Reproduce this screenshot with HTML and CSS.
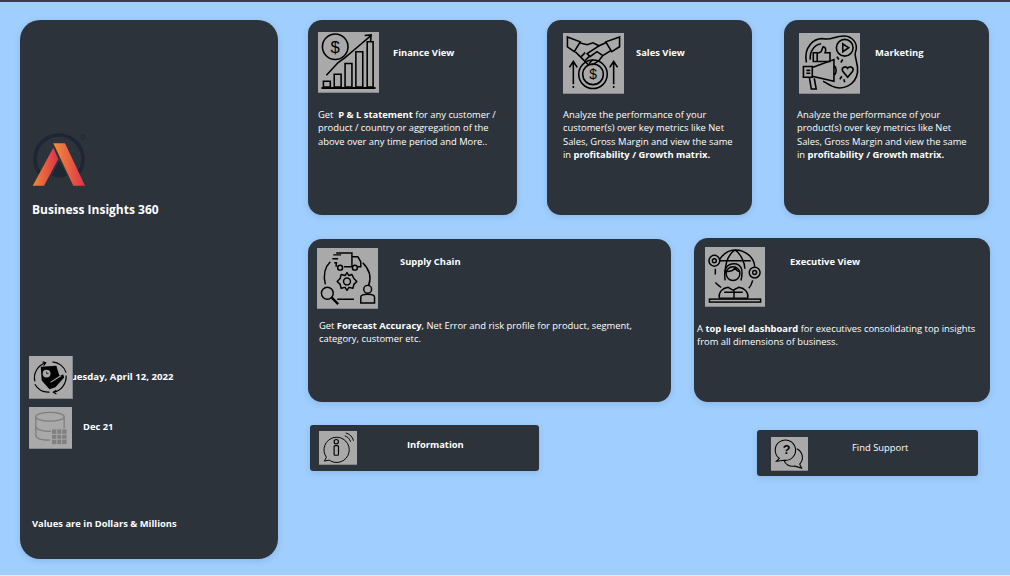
FILE: index.html
```html
<html>
  <head>
    <title>Business Insights 360</title>
    <link rel="stylesheet" href="styles.css">
  </head>
  <body>
    <div class="side panel">
      <svg class="logo" viewBox="0 0 56 56" aria-hidden="true">
        <defs>
          <linearGradient id="leg-left" x1="0" y1="0" x2="1" y2="0">
            <stop offset="0" stop-color="#f08a35"/><stop offset="1" stop-color="#dc2f4a"/>
          </linearGradient>
          <linearGradient id="leg-right" x1="0" y1="0" x2="1" y2="0">
            <stop offset="0" stop-color="#f0903a"/><stop offset="1" stop-color="#de3149"/>
          </linearGradient>
        </defs>
        <path d="M10 44A24 24 0 1 1 44 44" fill="none" stroke="#1e2633" stroke-width="3.6"/>
        <path d="M27.3 29 20 43.5C24 46 31 46 35 43.5Z" fill="#1e2633"/>
        <circle cx="51" cy="5" r="2" fill="none" stroke="#1e2633" stroke-width=".8"/>
        <path d="M21.3 15.7 .7 53.7H12L26.3 27Z" fill="url(#leg-left)"/>
        <path d="M21.3 11.3H33L53 53.7H41.3Z" fill="url(#leg-right)"/>
      </svg>
      <h1 class="brand">Business Insights 360</h1>
      <div class="stat stat-date">
        <span class="tile tile-date">
          <svg viewBox="0 0 44 43" aria-hidden="true">
            <g fill="none" stroke="#000" stroke-width="1.2">
              <path d="M6 26A16 16 0 0 1 17 7"/><path d="M14 6l3 1-2 3"/>
              <path d="M24 6A16 16 0 0 1 38 17"/>
              <path d="M38 20A16 16 0 0 1 25 37"/><path d="M28 35l-3 2 3 2"/>
              <path d="M21 37A16 16 0 0 1 6 29"/>
            </g>
            <path d="M12 11 28 10 31 20 35 19 36 22 27 32 21 34 13 25Z" fill="#000"/>
            <circle cx="18" cy="18" r="4" fill="#a9a9a9"/>
            <path d="M18 16v2h2" fill="none" stroke="#000" stroke-width=".8"/>
            <path d="M22 27 33 20" stroke="#a9a9a9" stroke-width="1.2"/>
          </svg>
        </span>
        <span class="stat-text">Tuesday, April 12, 2022</span>
      </div>
      <div class="stat stat-month">
        <span class="tile tile-db">
          <svg viewBox="0 0 43 42" aria-hidden="true">
            <g fill="none" stroke="#7d7d7d" stroke-width="1.3">
              <ellipse cx="21" cy="10" rx="14.5" ry="4.5"/>
              <path d="M6.500 10V29C6.500 32 12 34 21 34"/>
              <path d="M6.500 20C6.500 23 13 25 22 25"/>
              <path d="M35.500 10V22"/>
            </g>
            <rect x="23" y="23" width="15" height="15" fill="#808080"/>
            <path d="M28 23v15M33 23v15M23 28h15M23 33h15" stroke="#a9a9a9" stroke-width="1"/>
          </svg>
        </span>
        <span class="stat-text">Dec 21</span>
      </div>
      <p class="note">Values are in Dollars &amp; Millions</p>
    </div>

    <div class="main">
      <div class="row">
        <div class="panel card card-finance">
          <div class="head">
            <span class="tile">
              <svg viewBox="0 0 61 61" aria-hidden="true">
                <g fill="none" stroke="#000" stroke-width="1.6">
                  <circle cx="17" cy="15" r="13"/>
                  <path d="M5 50h7v6H5zM16 43h7v13h-7zM27 32h7v24h-7zM38 20h7v36h-7zM49.500 10h6v46h-6z"/>
                  <path d="M3 57h55" stroke-width="2"/>
                  <path d="M8 44 20 31 27 26 40 15 53 4"/>
                  <path d="M47 3.500 53.500 3 53 9.500"/>
                </g>
                <text class="glyph" x="17" y="21" font-size="17" text-anchor="middle">$</text>
              </svg>
            </span>
            <h2 class="title">Finance View</h2>
          </div>
          <p class="text">Get &nbsp;<b>P &amp; L statement</b> for any customer / product / country or aggregation of the above over any time period and More..</p>
        </div>

        <div class="panel card card-sales">
          <div class="head">
            <span class="tile">
              <svg viewBox="0 0 61 61" aria-hidden="true">
                <g fill="none" stroke="#000" stroke-width="1.6">
                  <path d="M4 4 17 9 11 19 4 14Z"/>
                  <path d="M57 4 43 9 49 19 57 14Z"/>
                  <path d="M16 10 24 12 30 10 36 13 43 10"/>
                  <path d="M12 19 17 24 25 32 30 32 36 28 40 23 48 18"/>
                  <path d="M36 13 24 21 27 24 34 19 40 23"/>
                  <path d="M18 24 22 20M22 28 26 24M26 31 30 27"/>
                  <circle cx="30" cy="42" r="14.500"/>
                  <circle cx="30" cy="42" r="10.500"/>
                  <path d="M10 52V30M6 35 10 29 14 35M51 52V30M47 35 51 29 55 35"/>
                  <path d="M10 54v2M51 54v2"/>
                </g>
                <text class="glyph" x="30" y="47" font-size="14" text-anchor="middle">$</text>
              </svg>
            </span>
            <h2 class="title">Sales View</h2>
          </div>
          <p class="text">Analyze the performance of your customer(s) over key metrics like Net Sales, Gross Margin and view the same in <b>profitability / Growth matrix.</b></p>
        </div>

        <div class="panel card card-marketing">
          <div class="head">
            <span class="tile">
              <svg viewBox="0 0 61 61" aria-hidden="true">
                <g fill="none" stroke="#000" stroke-width="1.6">
                  <path d="M7 30C4 15 14 4 26 6 33 7 36 3 45 3 54 3 60 11 57 19 55 24 60 30 59 40 57 53 44 59 33 54 29 52 26 50 24 49"/>
                  <path d="M11 27C10 19 15 12 22 11"/>
                  <circle cx="46" cy="15" r="8.500"/>
                  <path d="M44 11 50 15 44 19Z"/>
                  <path d="M14 20h4v9h-4zM18 21 22 19 24 14C27 14 27 18 26 20H31V29H18"/>
                  <path d="M4 34H13V45H4ZM13 35 35 27V49L13 44M35 33C38 35 38 41 35 43"/>
                  <path d="M7 38h4M7 41h4"/>
                  <path d="M10 45 12 57H17L15 46"/>
                  <path d="M49 45 44 39C42 35 47 33 49 36 51 33 56 35 54 39Z"/>
                  <path d="M38 24l2 3M44 27l-2 3M41 47l2-3M46 50l-1-3"/>
                </g>
              </svg>
            </span>
            <h2 class="title">Marketing</h2>
          </div>
          <p class="text">Analyze the performance of your product(s) over key metrics like Net Sales, Gross Margin and view the same in <b>profitability / Growth matrix.</b></p>
        </div>
      </div>

      <div class="row row-mid">
        <div class="panel card card-supply">
          <div class="head">
            <span class="tile">
              <svg viewBox="0 0 61 61" aria-hidden="true">
                <g fill="none" stroke="#000" stroke-width="1.5">
                  <path d="M19 5H35V19H27M35 9H41L44 14V19H41M16 7h8M15 11h6M17 15h3M19 15V19"/>
                  <circle cx="23" cy="20" r="2.500"/><circle cx="38" cy="20" r="2.500"/>
                  <path d="M13 14C7 20 6 29 8 37M46 15C53 22 55 30 52 38M20 52H37"/>
                  <circle cx="30" cy="34" r="3.500"/>
                  <path d="M30 25l2 3 3-1 2 4 3 3-3 3-1 4-4-1-2 3-2-3-4 1-1-4-3-3 3-3 1-4 4 1z" stroke-linejoin="round"/>
                  <circle cx="10" cy="46" r="6"/>
                  <path d="M14.500 50.500 21 57" stroke-width="2.400"/>
                  <circle cx="51" cy="42" r="4"/>
                  <path d="M44 56V50C44 48 47 47 51 47 55 47 58 48 58 50V56Z"/>
                </g>
              </svg>
            </span>
            <h2 class="title">Supply Chain</h2>
          </div>
          <p class="text">Get <b>Forecast Accuracy</b>, Net Error and risk profile for product, segment, category, customer etc.</p>
        </div>

        <div class="panel card card-exec">
          <div class="head">
            <span class="tile tile-exec">
              <svg viewBox="0 0 60 60" aria-hidden="true">
                <g fill="none" stroke="#000" stroke-width="1.5">
                  <path d="M14 13C18 7 24 3 30 3 42 3 50 12 50 20M30 3C24 7 20 16 20 27M30 3C36 7 40 16 40 22M14 14H46M10 28V22M10 36C12 38 14 40 16 41M48 34C47 38 46 40 44 42"/>
                  <circle cx="9" cy="14" r="5.500"/><circle cx="9" cy="14" r="2"/>
                  <circle cx="50" cy="26" r="5.500"/><circle cx="50" cy="26" r="2"/>
                  <path d="M20 34C18 22 22 17 29 17 36 17 39 23 36 34"/>
                  <circle cx="28" cy="27" r="7"/>
                  <path d="M22 25C26 25 29 23 30 21 31 23 33 25 35 25"/>
                  <path d="M14 52C13 46 17 42 23 41L28 44 34 41C40 42 44 46 43 52"/>
                  <path d="M19 46H38M29 44V52M14 52H43"/>
                  <rect x="4" y="53" width="52" height="3"/>
                </g>
              </svg>
            </span>
            <h2 class="title">Executive View</h2>
          </div>
          <p class="text">A <b>top level dashboard</b> for executives consolidating top insights from all dimensions of business.</p>
        </div>
      </div>

      <div class="row row-links">
        <div class="panel link link-info">
          <span class="tile tile-small">
            <svg viewBox="0 0 38 34" aria-hidden="true">
              <g fill="none" stroke="#000" stroke-width="1">
                <path d="M7 27A13 13 0 1 1 10 30L5 31Z"/>
                <rect x="15" y="15" width="4.500" height="10" rx="1" stroke-width="1.2"/>
                <circle cx="17.200" cy="11" r="2.200" stroke-width="1.200"/>
                <path d="M26 5C29 6 31 8 32 11M27 2C31 3 34 6 35 10"/>
              </g>
            </svg>
          </span>
          <h2 class="title">Information</h2>
        </div>
        <div class="panel link link-help">
          <span class="tile tile-small tile-help">
            <svg viewBox="0 0 37 34" aria-hidden="true">
              <g fill="none" stroke="#000" stroke-width="1.100">
                <path d="M8 22A10.500 10.500 0 1 1 13 24L5 25Z"/>
                <path d="M26 12A10 10 0 0 1 29 28L31 32 24 30C18 31 14 28 13 24"/>
              </g>
              <text class="glyph" x="15.500" y="18" font-size="13" text-anchor="middle" font-weight="700">?</text>
            </svg>
          </span>
          <h2 class="title title-plain">Find Support</h2>
        </div>
      </div>
    </div>
  </body>
</html>
```

FILE: styles.css
```css
html, body {
  margin:0;
  padding:0;
}

body {
  box-sizing:border-box;
  width:1010px;
  height:576px;
  overflow:hidden;
  display:flex;
  align-items:flex-start;
  padding:18px 0 0 20px;
  background:#9fceff;
  border-top:2px solid #3b3d40;
  border-bottom:1px solid #e4eef8;
  color:#fff;
  font:500 9.4px/13.3px 'Open Sans', sans-serif;
}

.panel {
  background:#2c333b;
  box-shadow:0 2px 6px rgba(60,90,130,0.18);
}

.tile {
  display:block;
  flex:none;
  width:61px;
  height:61px;
  background:#a9a9a9;
  border-bottom:1px solid #85878a;
  box-sizing:border-box;
}

.tile svg {
  display:block;
  width:100%;
  height:100%;
}

.glyph {
  font-family:'Liberation Sans', sans-serif;
  fill:#000;
}

/* left panel */
.side {
  box-sizing:border-box;
  width:258px;
  height:539px;
  flex:none;
  border-radius:20px;
  padding:112px 0 0 9px;
}

.logo {
  display:block;
  width:56px;
  height:56px;
  margin-left:3px;
}

.brand {
  margin:13px 0 0 3px;
  font-size:12px;
  line-height:18px;
  font-weight:700;
}

.stat {
  display:flex;
  font-weight:700;
}

.stat-date {
  margin-top:137px;
  align-items:center;
}

.stat-date .stat-text {
  margin-left:-8px;
  margin-top:-2px;
  font-size:9.6px;
}

.stat-month {
  margin-top:8px;
  align-items:center;
}

.stat-month .stat-text {
  margin-left:11px;
  margin-top:-3px;
}

.tile-date {
  position:relative;
  z-index:1;
  width:44px;
  height:43px;
  border-right:1px solid #85878a;
}

.tile-db {
  width:43px;
  height:42px;
}

.note {
  margin:68px 0 0 3px;
  font-weight:700;
}

/* right side */
.main {
  margin-left:30px;
  width:682px;
}

.row {
  display:flex;
  align-items:flex-start;
}

.card {
  box-sizing:border-box;
  border-radius:14px;
}

.head {
  display:flex;
  align-items:flex-start;
}

.title {
  margin:14px 0 0;
  font-size:9.4px;
  line-height:13.3px;
  font-weight:700;
}

.text {
  margin:0;
}

.card-finance {
  width:209px;
  height:195px;
  padding:12px 14px 0 10px;
}

.card-finance .head { gap:14px; }
.card-finance .text { margin-top:15px; }

.card-sales {
  width:205px;
  height:195px;
  margin-left:30px;
  padding:13px 12px 0 16px;
}

.card-sales .head { gap:12px; }
.card-sales .text { margin-top:14px; }
.card-sales .title { margin-top:13px; }

.card-marketing {
  width:205px;
  height:195px;
  margin-left:32px;
  padding:13px 12px 0 13px;
}

.card-marketing .head { gap:15px; margin-left:2px; }
.card-marketing .text { margin-top:14px; }
.card-marketing .title { margin-top:13px; }

.row-mid {
  margin-top:23px;
}

.card-supply {
  width:363px;
  height:163px;
  margin-top:1px;
  padding:9px 12px 0 11px;
}

.card-supply .head { gap:22px; margin-left:-2px; }
.card-supply .text { margin-top:10px; }
.card-supply .title { margin-top:7px; }

.card-exec {
  width:296px;
  height:164px;
  margin-left:23px;
  padding:9px 10px 0 3px;
}

.card-exec .head { gap:25px; margin-left:8px; }
.card-exec .text { margin-top:15px; }
.card-exec .title { margin-top:8px; }

.tile-exec {
  width:60px;
  height:60px;
}

.row-links {
  margin-top:23px;
}

.link {
  box-sizing:border-box;
  display:flex;
  align-items:flex-start;
  border-radius:3px;
}

.link-info {
  width:229px;
  height:46px;
  margin-left:2px;
  padding:6px 0 0 9px;
}

.link-info .title { margin:7px 0 0 50px; }

.link-help {
  width:221px;
  height:46px;
  margin:5px 0 0 218px;
  padding:7px 0 0 14px;
}

.link-help .title { margin:4px 0 0 44px; }

.tile-small {
  width:38px;
  height:34px;
}

.tile-help {
  width:37px;
}

.title-plain {
  font-weight:500;
}
```
